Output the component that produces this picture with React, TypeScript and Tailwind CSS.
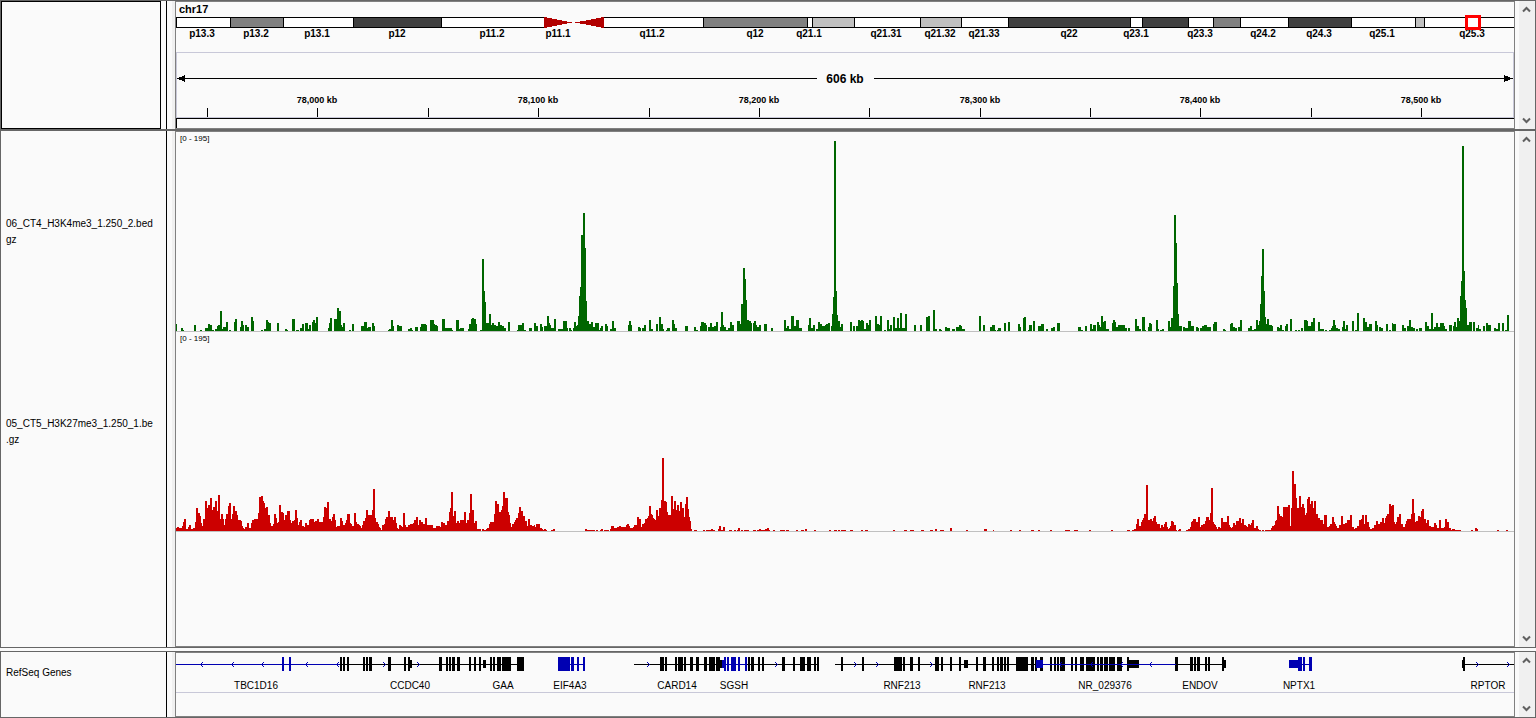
import type { ReactNode } from 'react';

const VIEW_WIDTH = 1338;

// x of a label as a share of the visible locus, so labels follow the window
const pct = (x: number) => `${(x / VIEW_WIDTH) * 100}%`;

const BANDS = [
    { x: 0, w: 54, fill: '#ffffff' },
    { x: 54, w: 53, fill: '#808080' },
    { x: 107, w: 70, fill: '#ffffff' },
    { x: 177, w: 88, fill: '#404040' },
    { x: 265, w: 103, fill: '#ffffff' },
    { x: 427, w: 100, fill: '#ffffff' },
    { x: 527, w: 104, fill: '#808080' },
    { x: 631, w: 5, fill: '#ffffff' },
    { x: 636, w: 42, fill: '#c0c0c0' },
    { x: 678, w: 66, fill: '#ffffff' },
    { x: 744, w: 41, fill: '#c0c0c0' },
    { x: 785, w: 47, fill: '#ffffff' },
    { x: 832, w: 122, fill: '#404040' },
    { x: 954, w: 12, fill: '#ffffff' },
    { x: 966, w: 46, fill: '#404040' },
    { x: 1012, w: 25, fill: '#ffffff' },
    { x: 1037, w: 27, fill: '#808080' },
    { x: 1064, w: 48, fill: '#ffffff' },
    { x: 1112, w: 63, fill: '#404040' },
    { x: 1175, w: 64, fill: '#ffffff' },
    { x: 1239, w: 9, fill: '#c0c0c0' },
    { x: 1248, w: 100, fill: '#ffffff' },
];

const BAND_LABELS: [string, number][] = [
    ['p13.3', 26], ['p13.2', 80], ['p13.1', 141], ['p12', 221], ['p11.2', 316], ['p11.1', 382],
    ['q11.2', 476], ['q12', 579], ['q21.1', 633], ['q21.31', 710], ['q21.32', 764], ['q21.33', 808],
    ['q22', 893], ['q23.1', 960], ['q23.3', 1024], ['q24.2', 1087], ['q24.3', 1143], ['q25.1', 1206],
    ['q25.3', 1296],
];

const TICKS = [31, 141, 252, 362, 473, 583, 693, 804, 914, 1024, 1135, 1245];

const TICK_LABELS: [string, number][] = [
    ['78,000 kb', 141],
    ['78,100 kb', 362],
    ['78,200 kb', 583],
    ['78,300 kb', 804],
    ['78,400 kb', 1024],
    ['78,500 kb', 1245],
];

// start,width,height
const H3K4ME3 = `
0,1,7 5,2,3 7,1,1 18,2,6 24,2,1 29,3,3 32,2,7 34,2,6 36,2,1 39,2,2 41,1,5 42,2,6 44,2,20 46,1,2 47,3,4 50,2,9 53,2,1
58,1,9 59,2,12 64,1,4 65,2,10 67,1,6 69,2,6 71,2,4 75,2,14 77,1,10 85,2,1 88,2,2 90,2,11 92,1,9 93,2,8 101,2,8
109,2,2 111,1,1 116,3,12 120,3,1 124,2,3 126,2,7 129,3,8 132,1,2 133,2,6 136,1,9 137,2,11 139,1,8 140,2,14
152,1,3 153,1,8 154,2,13 158,3,12 161,2,23 163,2,20 165,1,6 166,1,4 167,2,8 173,2,1 176,2,7 185,3,5 188,3,9 191,1,3
192,3,4 196,2,8 198,1,5 212,2,1 213,2,2 215,2,11 217,1,5 221,2,6 223,3,5 232,2,2 234,2,3 236,1,1 239,3,4 244,2,4
245,5,7 250,1,6 254,4,11 258,1,7 259,2,6 261,1,5 266,3,12 269,7,3 276,1,1 280,3,11 283,1,2 284,4,3 292,1,2 293,2,7
295,1,12 296,2,13 298,2,12 300,1,7 304,2,1 306,2,72 308,1,40 309,1,29 310,1,8 311,2,8 313,2,17 315,1,6 316,2,8
318,2,6 320,2,5 322,2,9 324,2,6 326,2,5 328,2,3 332,2,9 341,1,1 342,4,6 346,2,8 348,2,1 353,3,3 358,2,8 360,2,5
364,2,7 366,1,4 368,3,5 371,2,15 373,1,8 374,1,6 375,3,3 378,2,12 382,5,2 387,4,10 391,1,3 393,2,3 395,1,1 397,1,3
398,2,9 400,1,5 401,1,6 402,1,15 403,1,35 404,1,44 405,2,96 407,2,118 409,1,83 410,1,30 411,2,10 413,2,7 415,2,9
417,2,4 419,4,8 423,1,1 424,1,3 425,2,5 429,2,7 431,1,5 434,2,2 436,2,10 438,2,3 452,1,6 453,2,10 455,1,6 462,2,4
464,1,3 466,2,3 468,2,6 473,2,11 475,2,2 480,2,7 483,2,14 485,2,7 487,1,2 490,1,1 491,3,3 496,2,11 498,1,7 499,2,3
509,3,5 518,2,4 520,2,1 524,1,5 525,3,9 528,2,8 530,1,6 532,2,4 534,2,8 536,2,4 538,2,5 540,2,9 544,1,4 545,2,19
547,1,6 548,2,4 550,2,1 552,2,3 554,2,9 556,2,6 561,3,10 564,1,7 565,2,27 567,2,63 569,1,52 570,1,31 571,2,11
573,2,10 575,1,8 577,1,8 578,2,10 580,1,6 581,2,4 583,2,6 588,3,7 595,2,3 608,2,11 610,1,3 611,2,5 613,2,2 615,3,15
618,2,5 620,3,11 623,3,3 632,1,6 633,2,13 635,2,3 637,2,6 640,2,2 642,2,9 644,2,7 646,3,5 649,1,6 650,2,7 652,2,8
655,1,5 656,1,17 657,1,34 658,2,190 660,1,40 661,1,16 662,2,10 664,1,4 665,2,7 674,2,9 677,2,5 680,2,5 682,2,11
684,1,10 685,2,11 687,1,10 688,2,2 690,2,8 692,1,6 693,2,11 699,2,15 701,2,7 703,1,6 704,2,15 708,2,1 711,2,11
713,1,2 714,2,6 717,2,14 719,2,3 721,2,13 723,1,3 724,2,18 726,3,3 729,2,17 738,2,6 744,2,6 750,2,14 752,2,15
757,2,21 759,2,2 763,2,2 765,1,1 769,2,4 771,3,3 776,3,2 780,3,4 783,2,6 785,1,5 786,3,2 803,2,15 807,2,6 814,2,4
816,3,6 819,1,1 821,1,1 822,3,3 828,2,8 832,2,9 842,2,7 844,1,4 847,1,13 848,2,14 852,1,1 853,3,6 857,2,10 862,3,5
865,3,7 870,2,2 875,2,3 877,2,4 881,3,8 902,3,4 905,2,1 909,2,5 914,2,7 916,1,2 917,3,6 921,2,9 923,1,6 924,1,4
925,2,15 927,1,9 928,2,10 930,3,2 936,1,8 937,2,11 939,1,9 940,2,4 942,7,6 949,2,3 952,2,3 959,2,12 961,2,5 963,2,2
966,3,14 969,1,1 972,1,4 973,2,8 975,1,7 980,2,11 982,1,2 984,2,1 986,2,2 992,2,10 994,1,4 995,2,13 997,1,45
998,2,116 1000,1,88 1001,1,48 1002,1,17 1003,3,5 1007,2,4 1009,3,3 1012,3,10 1015,3,5 1020,2,4 1022,1,3 1024,2,3
1026,2,5 1028,3,6 1031,4,4 1037,1,7 1038,3,9 1047,2,2 1049,1,1 1054,1,7 1055,2,8 1057,2,4 1059,2,3 1062,2,4
1064,2,11 1072,2,3 1074,2,5 1076,2,1 1078,2,2 1080,2,11 1082,1,6 1083,1,10 1084,1,27 1085,1,55 1086,2,82 1088,1,40
1089,1,14 1090,1,7 1091,2,12 1093,3,6 1096,1,5 1101,2,4 1103,1,3 1104,2,6 1106,2,1 1109,1,5 1110,2,7 1114,2,12
1119,2,1 1122,2,1 1125,2,3 1128,3,11 1131,1,10 1132,3,5 1135,2,9 1137,2,13 1142,2,9 1144,4,2 1149,2,1 1153,2,1
1155,1,3 1156,1,5 1157,2,11 1159,1,6 1160,2,3 1162,2,2 1166,1,4 1167,2,10 1169,1,2 1170,2,6 1176,2,10 1179,2,1
1181,2,18 1187,2,13 1189,2,9 1191,2,4 1193,3,7 1199,2,10 1201,1,6 1203,2,4 1205,2,3 1210,2,7 1213,2,1 1216,1,8
1217,3,7 1226,2,6 1228,2,3 1231,2,5 1233,2,11 1235,2,4 1237,2,3 1240,2,2 1243,3,3 1249,2,9 1251,2,5 1253,2,2
1255,2,18 1257,1,2 1258,2,4 1260,2,8 1262,2,4 1264,4,8 1268,1,5 1269,2,2 1273,3,6 1277,1,5 1278,2,9 1280,1,4
1281,2,13 1283,1,10 1284,1,35 1285,1,50 1286,2,185 1288,1,60 1289,1,31 1290,1,23 1291,2,6 1293,3,9 1297,2,9
1300,2,3 1302,1,6 1303,2,2 1307,2,5 1310,2,8 1312,3,6 1318,2,3 1320,2,2 1322,2,8 1326,2,8 1329,2,1 1331,2,16
`;

// start,height; each value holds until the next start
const H3K27ME3 = `
0,3 1,4 3,3 6,5 7,9 8,12 10,2 12,4 13,6 15,2 17,3 19,9 20,23 22,18 24,15 25,8 26,5 27,12 29,30 31,23 32,26 34,33 36,21
37,24 39,30 41,20 42,36 44,12 45,17 47,12 48,6 49,12 50,17 52,25 53,28 55,12 56,17 57,25 59,20 61,16 62,11 65,10 66,5
67,3 68,2 69,4 71,8 73,3 75,8 76,11 78,12 82,18 83,34 85,35 87,30 88,28 89,23 90,24 92,16 94,8 95,5 97,7 98,17 100,13
101,8 102,9 103,26 105,19 107,18 108,11 109,16 111,20 114,11 115,8 116,10 118,11 119,21 121,13 122,6 123,9 124,11
126,5 128,4 129,8 131,6 133,11 134,12 138,9 139,10 141,12 143,9 147,14 148,24 150,23 151,29 153,12 155,10 156,14
157,17 159,11 160,4 161,5 164,13 166,10 167,6 169,8 170,11 171,17 174,8 175,7 176,5 178,18 180,9 181,7 183,6 184,5
185,3 186,6 187,10 189,13 190,21 192,16 196,21 197,42 199,13 200,9 202,7 203,4 204,3 205,1 206,6 208,7 209,12 210,14
212,20 214,14 217,11 218,14 220,8 221,3 222,2 223,6 225,5 226,4 227,18 229,6 230,4 232,6 234,7 237,8 238,11 240,14
242,6 243,11 245,9 247,7 249,13 251,6 257,3 260,5 264,4 265,9 267,8 269,6 271,10 273,19 274,23 275,39 277,15 278,20
280,8 281,10 283,8 284,11 288,19 290,8 291,11 293,18 294,37 296,21 298,8 299,10 301,2 305,0 306,2 308,1 310,2 311,3
313,7 314,9 318,17 319,30 321,27 323,19 325,21 326,25 327,39 329,33 332,19 333,16 334,8 335,4 336,7 338,9 339,11
340,13 342,18 343,24 345,20 347,15 349,10 351,5 352,12 354,6 356,5 358,6 359,4 360,7 364,3 366,2 367,1 368,2 370,1
371,0 375,1 377,2 379,0 409,2 411,1 419,0 420,1 422,0 424,1 425,2 427,0 428,1 433,0 434,2 435,5 438,3 441,4 443,5
445,4 450,6 451,7 453,5 454,3 457,4 458,6 461,14 463,12 465,4 466,7 468,8 469,12 471,13 472,15 473,25 475,17 476,16
477,13 478,12 479,11 480,21 482,15 483,23 485,31 486,73 488,30 490,29 491,19 492,16 495,35 497,22 498,30 500,21
501,26 503,20 504,29 506,23 508,14 509,27 510,34 512,22 513,14 514,10 515,2 516,0 518,1 521,0 527,1 529,0 530,1
535,2 537,1 539,0 542,2 543,5 545,1 547,4 549,0 553,1 556,0 558,1 560,0 561,1 562,3 564,0 565,1 567,0 568,1 573,0
577,1 580,0 581,1 583,2 585,1 589,2 591,3 593,1 594,0 597,1 599,0 604,1 609,0 610,1 613,0 620,1 622,0 625,1 628,0
629,2 631,0 638,1 640,0 653,1 655,0 658,1 661,0 662,1 664,0 665,1 670,0 674,1 677,0 685,1 687,0 689,1 692,0 717,1
719,0 728,1 731,0 734,1 738,0 745,1 748,0 754,1 757,0 759,2 761,0 764,1 768,0 774,3 776,0 790,1 792,0 808,2 811,0
817,1 818,0 834,1 836,0 843,1 845,0 855,1 858,0 862,1 864,0 874,1 876,0 889,1 894,0 898,1 902,0 913,1 915,0 935,1
937,0 951,1 954,0 956,1 958,2 960,7 961,12 963,5 965,9 966,11 967,13 968,17 970,46 972,11 974,12 976,10 977,13
978,15 980,9 981,7 984,3 985,6 987,4 988,7 989,9 991,4 992,2 993,3 994,5 995,10 997,9 998,6 1000,1 1001,0 1002,1
1003,2 1005,0 1010,1 1012,2 1014,4 1015,9 1016,10 1017,12 1020,9 1022,14 1024,4 1025,6 1027,7 1029,10 1030,14
1033,11 1034,18 1035,43 1037,9 1038,7 1039,6 1040,4 1041,2 1042,4 1044,3 1045,13 1047,9 1051,15 1053,6 1054,4
1055,3 1056,4 1057,8 1059,6 1060,10 1063,13 1065,8 1066,12 1068,6 1070,5 1071,4 1072,7 1074,6 1075,8 1076,11 1078,3
1080,5 1082,2 1083,1 1085,0 1086,1 1088,0 1089,1 1095,3 1096,5 1098,6 1099,10 1100,11 1101,25 1103,17 1104,15
1106,14 1107,24 1112,26 1114,5 1115,23 1116,60 1118,47 1120,33 1121,23 1123,35 1125,24 1126,27 1128,23 1129,16
1130,18 1131,32 1132,34 1134,27 1135,30 1137,23 1138,30 1140,17 1142,13 1144,11 1147,7 1148,16 1151,4 1153,5 1154,7
1156,14 1158,9 1159,7 1160,5 1161,3 1163,6 1165,15 1167,7 1169,8 1171,11 1174,16 1176,4 1178,2 1179,3 1181,5
1183,11 1185,12 1186,16 1188,7 1189,16 1191,9 1193,4 1194,2 1196,3 1198,6 1200,10 1202,7 1204,9 1206,13 1208,8
1209,13 1210,15 1211,17 1213,27 1215,25 1216,26 1218,9 1219,7 1220,9 1221,14 1223,17 1225,7 1227,4 1229,7 1230,10
1231,12 1235,17 1236,32 1238,18 1239,9 1240,10 1242,15 1244,14 1245,20 1246,22 1248,12 1250,8 1251,11 1253,5 1255,4
1258,8 1260,6 1261,3 1263,11 1265,3 1268,4 1269,12 1271,9 1273,3 1275,1 1276,2 1279,1 1285,0 1295,1 1297,0 1299,3
1301,2 1302,0 1321,1 1323,0 1330,1 1332,0
`;

const parse = (data: string) => data.trim().split(/\s+/).map(item => item.split(',').map(Number));

const BASELINE = 199;

const barsPath = (data: string) =>
    parse(data).map(([x, w, h]) => `M${x} ${BASELINE}v${-h}h${w}v${h}z`).join('');

const stepsPath = (data: string) =>
    `M0 ${BASELINE}` + parse(data).map(([x, h]) => `H${x}V${BASELINE - h}`).join('') + 'z';

const TRACKS = [
    { name: '06_CT4_H3K4me3_1.250_2.bed\ngz', color: '#006600', path: barsPath(H3K4ME3) },
    { name: '05_CT5_H3K27me3_1.250_1.be\n.gz', color: '#cc0000', path: stepsPath(H3K27ME3) },
];

const BLUE = '#0000b2';
const BLACK = '#000000';

// introns: from, to
const BLACK_INTRONS = [[164, 348], [458, 546], [571, 643], [659, 963], [999, 1050], [1287, 1338]];
const BLUE_INTRONS = [[0, 164], [382, 409], [546, 571], [867, 1000], [1113, 1136]];

// exons: start, width
const BLACK_EXONS = [
    [164, 2], [167, 2], [171, 2], [187, 2], [190, 2], [193, 3], [212, 3], [228, 2], [232, 2], [263, 3], [270, 2],
    [273, 2], [276, 3], [281, 3], [293, 2], [298, 2], [303, 2], [314, 2], [317, 2], [321, 4], [326, 9], [341, 7],
    [484, 4], [489, 2], [499, 2], [502, 5], [508, 2], [514, 3], [520, 3], [528, 3], [533, 6], [540, 4], [572, 2],
    [575, 3], [582, 2], [586, 2], [606, 3], [617, 2], [624, 5], [631, 4], [638, 2], [641, 2], [665, 2], [686, 2],
    [718, 8], [727, 2], [734, 3], [742, 2], [759, 4], [765, 2], [774, 2], [783, 2], [800, 2], [807, 3], [816, 2],
    [821, 2], [824, 3], [828, 2], [831, 2], [840, 12], [855, 3], [859, 2], [864, 3], [874, 2], [878, 2], [881, 2],
    [884, 5], [895, 2], [899, 2], [904, 4], [910, 9], [921, 2], [924, 3], [928, 4], [933, 6], [941, 5], [951, 2],
    [999, 3], [1014, 3], [1018, 2], [1021, 3], [1029, 2], [1032, 2], [1046, 2], [1287, 2],
];
const BLUE_EXONS = [
    [106, 2], [113, 2], [382, 12], [395, 3], [401, 2], [407, 2], [548, 2], [551, 2], [555, 5], [562, 2], [569, 2],
    [1122, 4], [1127, 2], [1133, 3],
];
const BLACK_UTRS = [[233, 3], [307, 3], [544, 3], [788, 4], [952, 11], [1048, 2], [1286, 1]];
const BLUE_UTRS = [[546, 3], [860, 7], [1113, 9]];

const REVERSE_ARROWS = [24, 55, 85, 129, 160, 883, 914, 944, 973];
const FORWARD_ARROWS = [210, 244, 474, 602, 681, 703, 757, 1303, 1334];

const GENE_LABELS: [string, number][] = [
    ['TBC1D16', 80], ['CCDC40', 234], ['GAA', 327], ['EIF4A3', 394], ['CARD14', 501], ['SGSH', 558],
    ['RNF213', 726], ['RNF213', 811], ['NR_029376', 929], ['ENDOV', 1024], ['NPTX1', 1123], ['RPTOR', 1312],
];

function Drawing({ height, children }: { height: number; children: ReactNode }) {
    return (
        <svg
            width="100%"
            height={height}
            viewBox={`0 0 ${VIEW_WIDTH} ${height}`}
            preserveAspectRatio="none"
            shapeRendering="crispEdges"
        >
            {children}
        </svg>
    );
}

function ScrollButton({ label, up }: { label: string; up?: boolean }) {
    return (
        <button type="button" aria-label={label} className="flex h-[17px] w-4 items-center justify-center">
            <svg width="10" height="7" viewBox="0 0 10 7" fill="none" stroke="#606060" strokeWidth="2">
                <path d={up ? 'M1 5.5L4.5 2L8 5.5' : 'M1 1.5L4.5 5L8 1.5'} />
            </svg>
        </button>
    );
}

function Panel({ title, names, children, className }: {
    title: string;
    names: ReactNode;
    children: ReactNode;
    className: string;
}) {
    return (
        <section aria-label={title} className={`flex border border-[#666666] bg-[#fafafa] ${className}`}>
            <div className="w-[166px] shrink-0 border-r border-black">{names}</div>
            <div className="w-2 shrink-0 border-r-3 border-[#f0f0f0]" />
            <div className="min-w-0 flex-1 border border-[#808080]">{children}</div>
            <div className="w-1 shrink-0" />
            <div className="flex w-4 shrink-0 flex-col justify-between bg-[#f0f0f0]">
                <ScrollButton label={`Scroll ${title} up`} up />
                <ScrollButton label={`Scroll ${title} down`} />
            </div>
        </section>
    );
}

function Header() {
    return (
        <svg className="block h-[126px] w-full" fill="#000000" fontWeight="bold">
            <Drawing height={126}>
                {BANDS.map(band => (
                    <g key={band.x}>
                        <rect x={band.x} y="15" width={band.w + 1} height="11" fill="#000000" />
                        <rect x={band.x + 1} y="16" width={band.w - 1} height="9" fill={band.fill} />
                    </g>
                ))}
                {/* centromere */}
                <rect x="367" y="16" width="2" height="9" fill="#ffffff" />
                <path d="M368 15L396 20.5L368 26z M428 15L399 20.5L428 26z" fill="#b20000" />

                {/* ruler */}
                <path d="M0 50H1338V116H0z M1 51V115H1337V51z" fill="#c8c8d8" fillRule="evenodd" />
                <rect x="1" y="76" width="640" height="1" />
                <rect x="698" y="76" width="639" height="1" />
                <path d="M1 76.5L9 73V80z M1337 76.5L1328 73V80z" />
                {TICKS.map(x => (
                    <rect key={x} x={x} y="106" width="1" height="9" />
                ))}
                <rect x="0" y="116" width="1338" height="1" />
                <rect x="0" y="116" width="1" height="10" />
            </Drawing>
            <text x="3" y="11" fontSize="11">chr17</text>
            {BAND_LABELS.map(([label, x]) => (
                <text key={label} x={pct(x)} y="35" fontSize="10" textAnchor="middle">{label}</text>
            ))}
            <text x="50%" y="81" fontSize="12" textAnchor="middle">606 kb</text>
            {TICK_LABELS.map(([label, x]) => (
                <text key={label} x={pct(x)} y="101" fontSize="9" textAnchor="middle">{label}</text>
            ))}
            {/* visible region */}
            <Drawing height={126}>
                <rect x="1290.5" y="14.5" width="13" height="12" fill="none" stroke="#ff0000" strokeWidth="3" />
            </Drawing>
        </svg>
    );
}

function SignalTrack({ color, path }: { color: string; path: string }) {
    return (
        <svg className="block h-[200px] w-full">
            <Drawing height={200}>
                <rect x="0" y={BASELINE} width={VIEW_WIDTH} height="1" fill="#c0c0c0" />
                <path d={path} fill={color} />
            </Drawing>
            <text x="4" y="9" fontSize="8">[0 - 195]</text>
        </svg>
    );
}

function GeneTrack() {
    return (
        <svg className="block h-[63px] w-full">
            <Drawing height={63}>
                {BLACK_INTRONS.map(([from, to]) => (
                    <rect key={from} x={from} y="11" width={to - from} height="1" fill={BLACK} />
                ))}
                {BLACK_EXONS.map(([x, w]) => (
                    <rect key={x} x={x} y="4" width={w} height="14" fill={BLACK} />
                ))}
                {BLACK_UTRS.map(([x, w]) => (
                    <rect key={x} x={x} y="7" width={w} height="8" fill={BLACK} />
                ))}
                {BLUE_INTRONS.map(([from, to]) => (
                    <rect key={from} x={from} y="11" width={to - from} height="1" fill={BLUE} />
                ))}
                {BLUE_EXONS.map(([x, w]) => (
                    <rect key={x} x={x} y="4" width={w} height="14" fill={BLUE} />
                ))}
                {BLUE_UTRS.map(([x, w]) => (
                    <rect key={x} x={x} y="7" width={w} height="8" fill={BLUE} />
                ))}
                {REVERSE_ARROWS.map(x => (
                    <path key={x} d={`M${x + 3} 9L${x + 0.5} 11.5L${x + 3} 14`} fill="none" stroke={BLUE} />
                ))}
                {FORWARD_ARROWS.map(x => (
                    <path key={x} d={`M${x - 3} 9L${x - 0.5} 11.5L${x - 3} 14`} fill="none" stroke={BLUE} />
                ))}
                <rect x="0" y="39" width={VIEW_WIDTH} height="1" fill="#c8c8d8" />
            </Drawing>
            {GENE_LABELS.map(([label, x]) => (
                <text key={x} x={pct(x)} y="36" fontSize="10" textAnchor="middle">{label}</text>
            ))}
        </svg>
    );
}

export default function App() {
    return (
        <main className="flex min-h-screen flex-col bg-[#fafafa] font-['Liberation_Sans',Arial,sans-serif] text-[10px] text-black">
            <Panel
                title="ideogram"
                className="shrink-0"
                names={<div className="h-full w-40 border border-black" />}
            >
                <Header />
            </Panel>

            <Panel
                title="data tracks"
                className="flex-1"
                names={
                    <div className="pt-px">
                        {TRACKS.map(track => (
                            <div key={track.color} className="flex h-[200px] items-center pl-[5px] leading-4 whitespace-pre">
                                {track.name}
                            </div>
                        ))}
                    </div>
                }
            >
                {TRACKS.map(track => (
                    <SignalTrack key={track.color} color={track.color} path={track.path} />
                ))}
            </Panel>

            <Panel
                title="features"
                className="mt-[3px] shrink-0"
                names={<div className="flex h-10 items-center pt-px pl-[5px]">RefSeq Genes</div>}
            >
                <GeneTrack />
            </Panel>
        </main>
    );
}
